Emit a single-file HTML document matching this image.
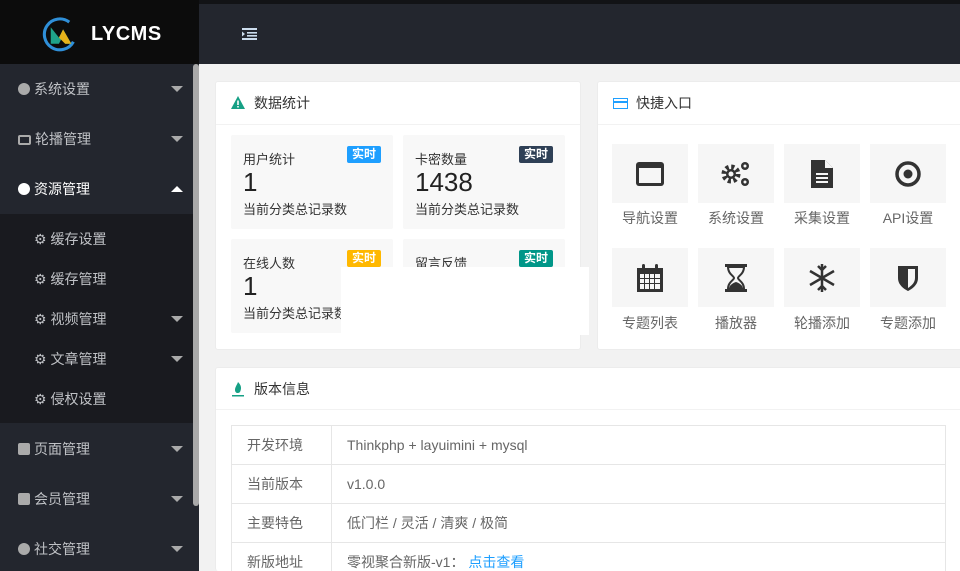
<!DOCTYPE html>
<html style="overflow:hidden;height:571px"><head><meta charset="utf-8"><style>
*{margin:0;padding:0;box-sizing:border-box}
body{width:960px;height:571px;overflow:hidden;background:#f2f2f2;font-family:"Liberation Sans","Noto Sans CJK SC",sans-serif;position:relative;font-size:13px;color:#333}
.abs{position:absolute}
#logo{left:0;top:0;width:199px;height:64px;background:#0c0c0c}
#top{left:199px;top:0;width:761px;height:64px;background:#23262e;border-top:4px solid #121316}
#side{left:0;top:64px;width:199px;height:507px;background:#23262e;overflow:hidden}
.mi{position:absolute;left:0;width:193px;height:50px;line-height:50px;color:#bfc1c5;font-size:14px;padding-left:18px}
.mi .ic{display:inline-block;width:12px;height:12px;margin-right:4px;vertical-align:-1px;background:#aaa;border-radius:2px}
.arr{position:absolute;right:10px;top:22px;width:0;height:0;border-left:6px solid transparent;border-right:6px solid transparent;border-top:6px solid #aaa}
.arr.up{border-top:0;border-bottom:6px solid #fff}
.sub{position:absolute;left:0;top:150px;width:193px;height:209px;background:#191a1f}
.si{position:absolute;left:34px;color:#bfc1c5;font-size:14px;height:40px;line-height:40px;width:159px}
.card{position:absolute;background:#fff;border-radius:3px;border:1px solid #ececec}
.ch{height:43px;line-height:42px;border-bottom:1px solid #f2f2f2;padding-left:38px;font-size:14px;color:#333;position:relative}
.st{position:absolute;background:#f8f8f8;width:162px;height:94px;padding:14px 12px;border-radius:2px}
.st .t{font-size:13px;color:#333}
.st .n{font-size:26px;line-height:26px;color:#222;margin-top:1px}
.st .d{font-size:13px;color:#333;margin-top:4px}
.bd{position:absolute;right:12px;top:11px;color:#fff;font-size:12px;font-weight:bold;height:17px;line-height:17px;padding:0 5px;border-radius:2px}
.tile{position:absolute;width:76px;height:59px;background:#f6f6f6;display:flex;align-items:center;justify-content:center}
.tl{position:absolute;width:96px;text-align:center;font-size:14px;color:#666}
table{position:absolute;left:231px;top:425px;border-collapse:collapse;width:715px}
td{border:1px solid #e6e6e6;height:39px;padding-left:15px;font-size:14px;color:#666}
</style></head><body>
<div class="abs" id="logo">
 <svg class="abs" style="left:41px;top:17px" width="38" height="35" viewBox="0 0 36 34"><path d="M27 5A15 15 0 1 0 31 24" fill="none" stroke="#2f8fd8" stroke-width="3"/><path d="M9 26V10l8 10 4-8 8 14h-6l-3-6-3 6z" fill="#1fa38a"/><path d="M17 20l4-8 8 14h-6z" fill="#e6b21a"/></svg>
 <div class="abs" style="left:91px;top:23px;color:#fff;font-weight:bold;font-size:20px;letter-spacing:0.5px">LYCMS</div>
</div>
<div class="abs" id="top"><svg class="abs" style="left:43px;top:24px" width="15" height="12" viewBox="0 0 15 12"><rect x="0" y="0" width="15" height="2" fill="#cde"/><rect x="5" y="4" width="10" height="1.6" fill="#cde"/><rect x="5" y="7" width="10" height="1.6" fill="#cde"/><rect x="0" y="10" width="15" height="2" fill="#cde"/><path d="M0 3.5l3 2.5-3 2.5z" fill="#cde"/></svg></div>
<div class="abs" id="side">
 <div class="mi" style="top:0"><span class="ic" style="border-radius:50%"></span>系统设置<i class="arr"></i></div>
 <div class="mi" style="top:50px"><span class="ic" style="background:none;border:2px solid #aaa;height:10px;width:13px"></span>轮播管理<i class="arr"></i></div>
 <div class="mi" style="top:100px;color:#fff"><span class="ic" style="background:#fff;border-radius:50%"></span>资源管理<i class="arr up"></i></div>
 <div class="sub">
  <div class="si" style="top:5px">⚙ 缓存设置</div>
  <div class="si" style="top:45px">⚙ 缓存管理</div>
  <div class="si" style="top:85px">⚙ 视频管理<i class="arr" style="top:17px;right:10px"></i></div>
  <div class="si" style="top:125px">⚙ 文章管理<i class="arr" style="top:17px;right:10px"></i></div>
  <div class="si" style="top:165px">⚙ 侵权设置</div>
 </div>
 <div class="mi" style="top:360px"><span class="ic"></span>页面管理<i class="arr"></i></div>
 <div class="mi" style="top:410px"><span class="ic"></span>会员管理<i class="arr"></i></div>
 <div class="mi" style="top:460px"><span class="ic" style="border-radius:50%"></span>社交管理<i class="arr"></i></div>
 <div class="abs" style="left:193px;top:0;width:6px;height:442px;background:#a9a9a9;border-radius:3px"></div>
</div>

<div class="card" style="left:215px;top:81px;width:366px;height:269px">
 <div class="ch"><svg class="abs" style="left:15px;top:14px" width="14" height="13" viewBox="0 0 14 13"><path d="M7 0L14 13H0z" fill="#16a085"/><rect x="6.2" y="4.5" width="1.6" height="4.5" fill="#fff"/><rect x="6.2" y="10" width="1.6" height="1.5" fill="#fff"/></svg>数据统计</div>
</div>
<div class="st" style="left:231px;top:135px"><div class="t">用户统计</div><div class="n">1</div><div class="d">当前分类总记录数</div><span class="bd" style="background:#1e9fff">实时</span></div>
<div class="st" style="left:403px;top:135px"><div class="t">卡密数量</div><div class="n">1438</div><div class="d">当前分类总记录数</div><span class="bd" style="background:#2f4056">实时</span></div>
<div class="st" style="left:231px;top:239px"><div class="t">在线人数</div><div class="n">1</div><div class="d">当前分类总记录数</div><span class="bd" style="background:#ffb800">实时</span></div>
<div class="st" style="left:403px;top:239px"><div class="t">留言反馈</div><span class="bd" style="background:#009688">实时</span></div>
<div class="abs" style="left:341px;top:267px;width:248px;height:68px;background:#fff"></div>

<div class="card" style="left:597px;top:81px;width:370px;height:269px">
 <div class="ch"><svg class="abs" style="left:15px;top:16px" width="15" height="11" viewBox="0 0 15 11"><rect x="0.5" y="0.5" width="14" height="10" fill="none" stroke="#1e9fff"/><rect x="0.5" y="3" width="14" height="2" fill="#1e9fff"/></svg>快捷入口</div>
</div>
<div class="tile" style="left:612px;top:144px"><svg width="30" height="26"><rect x="1" y="1" width="28" height="24" rx="3" fill="#333"/><rect x="4" y="7" width="22" height="15" fill="#f6f6f6"/></svg></div>
<div class="tile" style="left:698px;top:144px"><svg width="32" height="28" viewBox="0 0 32 28"><circle cx="11" cy="14" r="7" fill="none" stroke="#333" stroke-width="5" stroke-dasharray="3 2.5"/><circle cx="11" cy="14" r="5" fill="#333"/><circle cx="11" cy="14" r="2.5" fill="#f6f6f6"/><circle cx="25" cy="6" r="4" fill="#333"/><circle cx="25" cy="6" r="1.5" fill="#f6f6f6"/><circle cx="25" cy="22" r="4" fill="#333"/><circle cx="25" cy="22" r="1.5" fill="#f6f6f6"/></svg></div>
<div class="tile" style="left:784px;top:144px"><svg width="26" height="30"><path d="M2 1h14l8 8v20H2z" fill="#333"/><path d="M16 1v8h8" fill="#f6f6f6"/><rect x="7" y="14" width="12" height="2" fill="#f6f6f6"/><rect x="7" y="18" width="12" height="2" fill="#f6f6f6"/><rect x="7" y="22" width="12" height="2" fill="#f6f6f6"/></svg></div>
<div class="tile" style="left:870px;top:144px"><svg width="28" height="28"><circle cx="14" cy="14" r="11" fill="none" stroke="#333" stroke-width="3.5"/><circle cx="14" cy="14" r="4.5" fill="#333"/></svg></div>
<div class="tile" style="left:612px;top:248px"><svg width="30" height="30"><rect x="2" y="5" width="26" height="24" fill="#333"/><g fill="#f6f6f6"><rect x="5" y="11" width="4" height="4"/><rect x="10" y="11" width="4" height="4"/><rect x="15" y="11" width="4" height="4"/><rect x="20" y="11" width="5" height="4"/><rect x="5" y="16" width="4" height="4"/><rect x="10" y="16" width="4" height="4"/><rect x="15" y="16" width="4" height="4"/><rect x="20" y="16" width="5" height="4"/><rect x="5" y="21" width="4" height="5"/><rect x="10" y="21" width="4" height="5"/><rect x="15" y="21" width="4" height="5"/><rect x="20" y="21" width="5" height="5"/></g><rect x="7" y="1" width="3" height="7" rx="1.5" fill="#333"/><rect x="20" y="1" width="3" height="7" rx="1.5" fill="#333"/></svg></div>
<div class="tile" style="left:698px;top:248px"><svg width="26" height="30"><rect x="2" y="1" width="22" height="3" fill="#333"/><rect x="2" y="26" width="22" height="3" fill="#333"/><path d="M5 4h16c0 7-6 9-6 11s6 4 6 11H5c0-7 6-9 6-11S5 11 5 4z" fill="none" stroke="#333" stroke-width="2"/><path d="M6 26c0-5 7-7 7-7s7 2 7 7z" fill="#333"/></svg></div>
<div class="tile" style="left:784px;top:248px"><svg width="30" height="30" viewBox="0 0 30 30" stroke="#333" stroke-width="2.5" fill="none"><path d="M15 1v28M3 8l24 14M3 22l24-14"/><path d="M11 3l4 4 4-4M11 27l4-4 4 4"/></svg></div>
<div class="tile" style="left:870px;top:248px"><svg width="24" height="28"><path d="M2 2h20v12c0 7-6 11-10 13C8 25 2 21 2 14z" fill="#333"/><path d="M12 5h7v9c0 5-4 8-7 10z" fill="#f6f6f6"/></svg></div>
<div class="tl" style="left:602px;top:208px">导航设置</div>
<div class="tl" style="left:688px;top:208px">系统设置</div>
<div class="tl" style="left:774px;top:208px">采集设置</div>
<div class="tl" style="left:860px;top:208px">API设置</div>
<div class="tl" style="left:602px;top:313px">专题列表</div>
<div class="tl" style="left:688px;top:313px">播放器</div>
<div class="tl" style="left:774px;top:313px">轮播添加</div>
<div class="tl" style="left:860px;top:313px">专题添加</div>

<div class="card" style="left:215px;top:367px;width:760px;height:204px;border-bottom:0">
 <div class="ch" style="height:42px"><svg class="abs" style="left:16px;top:13px" width="12" height="16"><path d="M6 1C9 4 10 7 8 11 6 13 3 12 3 9 3 6 5 4 6 1z" fill="#16a085"/><rect x="0" y="14" width="12" height="1.5" fill="#16a085"/></svg>版本信息</div>
</div>
<table>
<tr><td style="width:100px">开发环境</td><td>Thinkphp + layuimini + mysql</td></tr>
<tr><td>当前版本</td><td>v1.0.0</td></tr>
<tr><td>主要特色</td><td>低门栏 / 灵活 / 清爽 / 极简</td></tr>
<tr><td>新版地址</td><td>零视聚合新版-v1： <span style="color:#1e9fff">点击查看</span></td></tr>
</table>
</body></html>
